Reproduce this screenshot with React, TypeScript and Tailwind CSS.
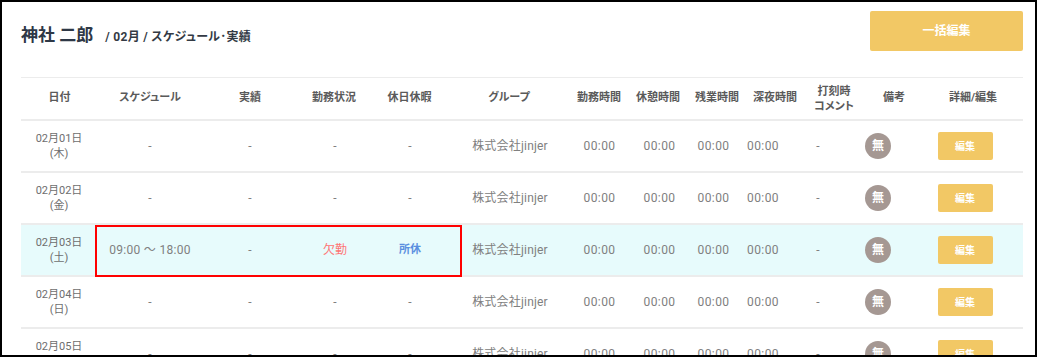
import React from "react";

const headerCols =
  "grid grid-cols-[77px_104px_96px_72px_79px_120px_60px_58px_60px_56px_62px_58px_100px]";
const bodyCols =
  "grid grid-cols-[76px_106px_94px_76px_74px_126px_53px_67px_41px_58px_52px_68px_106px]";

type Row = {
  date: string;
  dow: string;
  schedule: string;
  status?: string;
  holiday?: string;
  highlight?: boolean;
};

const rows: Row[] = [
  { date: "02月01日", dow: "(木)", schedule: "-" },
  { date: "02月02日", dow: "(金)", schedule: "-" },
  { date: "02月03日", dow: "(土)", schedule: "09:00 ～ 18:00", status: "欠勤", holiday: "所休", highlight: true },
  { date: "02月04日", dow: "(日)", schedule: "-" },
  { date: "02月05日", dow: "(月)", schedule: "-" },
];

const headers = [
  "日付",
  "スケジュール",
  "実績",
  "勤務状況",
  "休日休暇",
  "グループ",
  "勤務時間",
  "休憩時間",
  "残業時間",
  "深夜時間",
  "COMMENT",
  "備考",
  "詳細/編集",
];

export default function App() {
  return (
    <div className="relative w-[1037px] h-[357px] overflow-hidden border-2 border-black bg-white font-['Roboto','Noto_Sans_CJK_JP',sans-serif] [font-feature-settings:'palt']">
      <div className="pl-[19px] pr-[12px]">
        {/* Top header */}
        <div className="flex h-[75px] items-start justify-between">
          <div className="mt-[21px] flex items-baseline">
            <span className="text-[17px] leading-[24px] font-bold text-[#2e3846]">神社 二郎</span>
            <span className="ml-[12px] text-[12px] font-bold text-[#333a44] tracking-[0.3px]">/ 02月 / スケジュール･実績</span>
          </div>
          <button className="mt-[9px] flex h-[40px] w-[153px] items-center justify-center rounded-[2px] bg-[#f2c865] text-[12px] font-bold text-white">
            一括編集
          </button>
        </div>

        {/* Table header */}
        <div className={`${headerCols} h-[44px] border-t border-b-2 border-[#ececec] items-center text-[11px] font-bold text-[#5a5a5a]`}>
          {headers.map((h) =>
            h === "COMMENT" ? (
              <div key={h} className="text-center leading-[15px]">
                打刻時
                <br />
                コメント
              </div>
            ) : (
              <div key={h} className="text-center">
                {h}
              </div>
            )
          )}
        </div>

        {/* Body rows */}
        {rows.map((r) => (
          <div
            key={r.date}
            className={`${bodyCols} h-[52px] border-b-2 border-[#ececec] items-center text-[#808080] ${r.highlight ? "bg-[#e7fbfc]" : "bg-white"}`}
          >
            <div className="text-center text-[11px] leading-[15px] text-[#6e6e6e]">
              {r.date}
              <br />
              {r.dow}
            </div>
            <div className="text-center text-[12px] tracking-[0.3px]">{r.schedule}</div>
            <div className="text-center text-[12px]">-</div>
            <div className={`text-center text-[12px] ${r.status ? "text-[#ff7474]" : ""}`}>
              {r.status ?? "-"}
            </div>
            <div className={`text-center ${r.holiday ? "text-[11px] font-bold text-[#5a8fe0]" : "text-[12px]"}`}>
              {r.holiday ?? "-"}
            </div>
            <div className="text-center text-[12px] tracking-[0.2px]">株式会社jinjer</div>
            <div className="text-center text-[12px] tracking-[0.4px]">00:00</div>
            <div className="text-center text-[12px] tracking-[0.4px]">00:00</div>
            <div className="text-center text-[12px] tracking-[0.4px]">00:00</div>
            <div className="text-center text-[12px] tracking-[0.4px]">00:00</div>
            <div className="text-center text-[12px]">-</div>
            <div className="flex justify-center">
              <div className="flex h-[26px] w-[26px] items-center justify-center rounded-full bg-[#a59893] text-[12px] font-bold text-white">
                無
              </div>
            </div>
            <div className="flex justify-center">
              <button className="flex h-[28px] w-[55px] items-center justify-center rounded-[2px] bg-[#f2c865] text-[10px] font-bold text-white">
                編集
              </button>
            </div>
          </div>
        ))}
      </div>

      {/* Red annotation box */}
      <div className="absolute left-[93px] top-[223px] h-[52px] w-[367px] border-2 border-[#ff0000]" />
    </div>
  );
}
